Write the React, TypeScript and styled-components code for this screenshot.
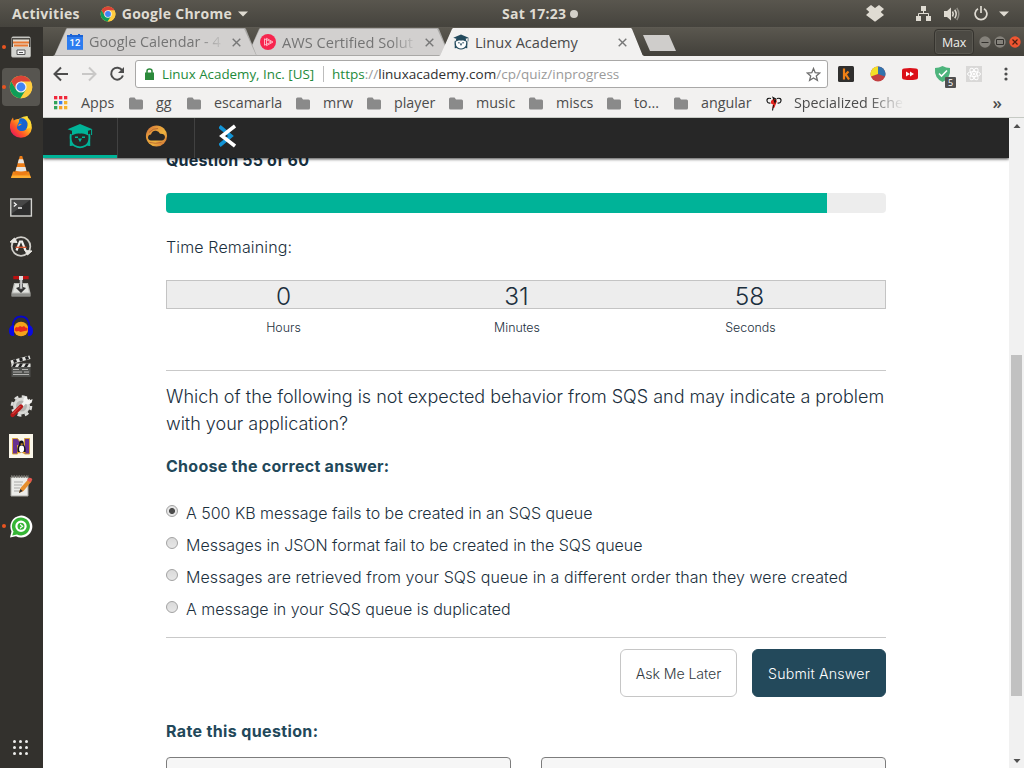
import React from "react";
import styled, { createGlobalStyle, css } from "styled-components";

const GlobalStyle = createGlobalStyle`
  * { box-sizing: border-box; }
  html, body { margin: 0; padding: 0; overflow: hidden; }
  svg { display: block; flex: none; }
`;

const uiFont = `"Open Sans", "Noto Sans", sans-serif`;
const pageFont = `Inter, "Liberation Sans", sans-serif`;

const Desktop = styled.div`
  width: 1024px;
  height: 768px;
  display: flex;
  flex-direction: column;
  overflow: hidden;
  font-family: ${uiFont};
  background: #fff;
`;

/* ---------- system bar ---------- */

const SystemBar = styled.header`
  height: 27px;
  flex: none;
  display: grid;
  grid-template-columns: 501px 78px 1fr;
  align-items: center;
  background: linear-gradient(#59564e, #45433d);
  color: #dfdbd2;
  font-size: 14px;
  font-weight: 700;
  letter-spacing: 0.27px;
  line-height: 26px;
`;

const BarLeft = styled.div`
  display: flex;
  align-items: center;
  padding-left: 12px;
`;

const AppMenu = styled.div`
  display: flex;
  align-items: center;
  margin-left: 20px;
  gap: 6px;
`;

const Clock = styled.div`
  display: flex;
  align-items: center;
  gap: 4px;
  margin-left: 1px;
  white-space: nowrap;
`;

const ClockDot = styled.span`
  width: 8px;
  height: 8px;
  border-radius: 50%;
  background: #d3d0c9;
`;

const Tray = styled.div`
  display: flex;
  align-items: center;
  justify-content: flex-end;
  padding-right: 15px;
`;

const TrayItem = styled.span<{ $gap?: number }>`
  margin-left: ${(p) => p.$gap ?? 12}px;
`;

const Below = styled.div`
  flex: 1;
  display: flex;
  min-height: 0;
`;

/* ---------- dock ---------- */

const Dock = styled.nav`
  width: 43px;
  flex: none;
  background: #33312d;
  display: flex;
  flex-direction: column;
  justify-content: space-between;
`;

const DockList = styled.div`
  display: flex;
  flex-direction: column;
`;

const DockItem = styled.div<{ $running?: boolean }>`
  height: 39.95px;
  display: flex;
  align-items: center;
  padding-left: 2px;
  &::before {
    content: "";
    width: 4px;
    height: 4px;
    margin-right: -4px;
    z-index: 1;
    border-radius: 50%;
    background: ${(p) => (p.$running ? "#e95420" : "transparent")};
  }
`;

const DockTile = styled.div<{ $active?: boolean }>`
  width: 38px;
  height: 38px;
  display: flex;
  align-items: center;
  justify-content: center;
  border-radius: 4px;
  background: ${(p) => (p.$active ? "#575550" : "transparent")};
`;

const AppGrid = styled.div`
  display: grid;
  grid-template-columns: repeat(3, 3px);
  gap: 3px;
  padding: 0 0 13px 13px;
`;

const GridDot = styled.i`
  width: 3px;
  height: 3px;
  border-radius: 50%;
  background: #eeeeec;
`;

/* ---------- browser ---------- */

const Browser = styled.main`
  flex: 1;
  min-width: 0;
  display: flex;
  flex-direction: column;
`;

const TabStrip = styled.div`
  height: 29px;
  flex: none;
  display: flex;
  align-items: flex-end;
  padding-left: 10px;
  background: linear-gradient(#5a574f, #42403a);
  border-top: 1px solid #5d5a52;
`;

const Tab = styled.div<{ $active?: boolean; $order: number; $size: number }>`
  position: relative;
  z-index: ${(p) => p.$order};
  width: 205px;
  height: 28px;
  margin-right: -12px;
  padding: 0 17px 0 14px;
  display: flex;
  align-items: center;
  font-size: ${(p) => p.$size}px;
  line-height: 28px;
  color: ${(p) => (p.$active ? "#4a4a4a" : "#747474")};
  &::before,
  &::after {
    content: "";
    position: absolute;
    inset: 0;
    z-index: -1;
    background: ${(p) => (p.$active ? "#f2f1f0" : "#a9a8a6")};
    clip-path: polygon(0 100%, 1.5px 27px, 13px 1px, 14px 0, 192px 0, 193px 1px, 203.5px 27px, 100% 100%);
  }
  &::after {
    background: ${(p) => (p.$active ? "#f2f1f0" : "#d2d0cf")};
    clip-path: polygon(2px 27px, 13.8px 1px, 191.2px 1px, 203px 27px);
  }
`;

const TabTitle = styled.span<{ $fade?: boolean }>`
  flex: 1;
  margin: 0 10px 0 6px;
  overflow: hidden;
  white-space: nowrap;
  ${(p) =>
    p.$fade &&
    css`
      mask-image: linear-gradient(90deg, #000 108px, transparent 136px);
    `}
`;

const NewTab = styled.div`
  width: 33px;
  height: 16px;
  margin: 0 0 5px 11px;
  background: #cfcdcb;
  clip-path: polygon(0 0, 26px 0, 100% 100%, 7px 100%);
`;

const WindowControls = styled.div`
  margin-left: auto;
  height: 28px;
  display: flex;
  align-items: center;
  gap: 3px;
  padding-right: 3px;
`;

const ProfileButton = styled.div`
  width: 40px;
  height: 26px;
  margin-right: 2px;
  border: 1px solid #35332e;
  border-radius: 4px;
  background: #4b4943;
  box-shadow: inset 0 0 0 1px #5a5851;
  color: #f0efed;
  font-size: 12.5px;
  line-height: 25px;
  text-align: center;
  letter-spacing: -0.2px;
`;

const Toolbar = styled.div`
  height: 36px;
  flex: none;
  display: flex;
  align-items: center;
  background: #f2f1f0;
  padding-left: 10px;
`;

const NavButtons = styled.div`
  width: 82px;
  display: flex;
  gap: 12px;
`;

const Omnibox = styled.div`
  width: 693px;
  height: 28px;
  border: 1px solid #a9a8a7;
  border-radius: 3px;
  background: #fff;
  display: flex;
  align-items: center;
  padding: 0 6px 0 9px;
  font-size: 13.5px;
  line-height: 26px;
  color: #9a9a9a;
  white-space: nowrap;
`;

const SiteIdentity = styled.span`
  width: 161px;
  margin-left: 8px;
  color: #1d8a3b;
  font-size: 13.35px;
`;

const Scheme = styled.span`
  color: #1d8a3b;
`;

const Host = styled.span`
  color: #303030;
`;

const Url = styled.span`
  flex: 1;
  padding-left: 8px;
  letter-spacing: 0.02px;
`;

const Divider = styled.span`
  width: 1px;
  height: 16px;
  background: #bdbdbd;
`;

const ExtensionList = styled.div`
  display: flex;
  align-items: center;
  height: 36px;
  margin-left: 2px;
`;

const Extension = styled.div<{ $badge?: boolean }>`
  width: 32px;
  display: flex;
  justify-content: center;
  padding: ${(p) => (p.$badge ? "3px 0 0 6px" : "0")};
`;

const Bookmarks = styled.div`
  height: 26px;
  flex: none;
  display: flex;
  align-items: center;
  padding: 0 22px 3px 11px;
  background: #f2f1f0;
  border-bottom: 1px solid #c6cac4;
  font-size: 14.3px;
  line-height: 22px;
  color: #4c4c4c;
`;

const Bookmark = styled.div<{ $width: number; $fade?: boolean }>`
  width: ${(p) => p.$width}px;
  display: flex;
  align-items: center;
  gap: ${(p) => (p.$fade ? 12 : 13)}px;
  overflow: hidden;
  white-space: nowrap;
  ${(p) =>
    p.$fade &&
    css`
      mask-image: linear-gradient(90deg, #000 102px, transparent 138px);
    `}
`;

const More = styled.span`
  margin-left: auto;
  font-size: 17px;
  font-weight: 600;
  line-height: 18px;
`;

/* ---------- web page ---------- */

const Viewport = styled.div`
  flex: 1;
  min-height: 0;
  display: flex;
`;

const Page = styled.div`
  flex: 1;
  display: flex;
  flex-direction: column;
  min-width: 0;
  font-family: ${pageFont};
  font-weight: 300;
  color: #1b2f3d;
`;

const SiteNav = styled.div`
  position: relative;
  z-index: 2;
  height: 40px;
  flex: none;
  display: flex;
  background: #272727;
  box-shadow: 0 1px 3px rgba(0, 0, 0, 0.75);
  clip-path: inset(0 0 -6px 0);
`;

const SiteTab = styled.div<{ $width: number; $active?: boolean; $last?: boolean }>`
  width: ${(p) => p.$width}px;
  height: 40px;
  display: flex;
  justify-content: center;
  padding-top: ${(p) => (p.$active ? 5 : 6)}px;
  border-right: ${(p) => (p.$last ? "none" : "1px solid #414141")};
  box-shadow: ${(p) => (p.$active ? "inset 0 -3px #00b398" : "none")};
`;

const Quiz = styled.section`
  flex: 1;
  min-height: 0;
  overflow: hidden;
  padding: 0 123px;
`;

const Counter = styled.h2`
  margin: -8px 0 23px;
  font-size: 16px;
  line-height: 20px;
  font-weight: 700;
  letter-spacing: 0.18px;
  color: #17303f;
`;

const Progress = styled.div`
  height: 20px;
  border-radius: 4px;
  overflow: hidden;
  background: #ededed;
`;

const ProgressFill = styled.div`
  height: 100%;
  background: #00b398;
`;

const TimeLabel = styled.div`
  margin: 24px 0 23px;
  font-size: 16px;
  line-height: 20px;
  letter-spacing: 0.14px;
`;

const Timer = styled.div`
  height: 29px;
  display: grid;
  grid-template-columns: 233px 233px 233px;
  border: 1px solid #c4c4c4;
  background: #ededed;
  font-size: 24.5px;
  line-height: 30px;
  text-align: center;
`;

const TimerUnits = styled.div`
  display: grid;
  grid-template-columns: 233px 234px 233px;
  margin: 9px 0 33px 1px;
  font-size: 12.4px;
  line-height: 19px;
  text-align: center;
`;

const Rule = styled.div`
  height: 1px;
  background: #c9c9c9;
`;

const Prompt = styled.p`
  margin: 12px 0 19px;
  font-size: 18px;
  line-height: 27px;
  letter-spacing: -0.01px;
`;

const Heading = styled.h3<{ $spacing?: number }>`
  margin: 0;
  font-size: 16px;
  line-height: 20px;
  font-weight: 700;
  letter-spacing: ${(p) => p.$spacing ?? 0.27}px;
  color: #22485a;
`;

const Options = styled.div`
  margin: 21px 0 12px;
`;

const Option = styled.label<{ $spacing: number }>`
  height: 32px;
  display: flex;
  align-items: center;
  gap: 8px;
  font-size: 16px;
  letter-spacing: ${(p) => p.$spacing}px;
`;

const Radio = styled.span<{ $checked?: boolean }>`
  width: 12px;
  height: 12px;
  margin-bottom: 4px;
  border: 1px solid #a2a2a2;
  border-radius: 50%;
  background: ${(p) =>
    p.$checked
      ? "radial-gradient(circle, #4c4c4c 2.6px, #e6e6e6 3.4px)"
      : "linear-gradient(#dadada, #e6e6e6)"};
`;

const Actions = styled.div`
  display: flex;
  justify-content: flex-end;
  gap: 15px;
  margin: 11px 0 24px;
`;

const Button = styled.button<{ $primary?: boolean }>`
  width: ${(p) => (p.$primary ? 134 : 117)}px;
  height: 48px;
  padding: 0;
  border: 1px solid ${(p) => (p.$primary ? "#23495b" : "#c6c6c6")};
  border-radius: 6px;
  background: ${(p) => (p.$primary ? "#23495b" : "#fff")};
  color: ${(p) => (p.$primary ? "#fff" : "#333b42")};
  font-family: ${pageFont};
  font-weight: 300;
  font-size: 14.2px;
  letter-spacing: ${(p) => (p.$primary ? 0.18 : -0.1)}px;
  white-space: nowrap;
`;

const Ratings = styled.div`
  display: grid;
  grid-template-columns: 345px 345px;
  gap: 30px;
  margin-top: 16px;
`;

const RatingBox = styled.div`
  height: 44px;
  border: 1px solid #7d7d7d;
  border-radius: 4px;
  background: #f6f6f6;
`;

const Scrollbar = styled.div`
  width: 15px;
  flex: none;
  display: flex;
  flex-direction: column;
  align-items: center;
  background: #f1f1f1;
  padding: 6px 0 5px;
`;

const Thumb = styled.div`
  width: 11px;
  height: 341px;
  margin: 227px 0 auto;
  background: #c1c1c1;
`;

/* ---------- drawings ---------- */

const Chrome = ({ size }: { size: number }) => (
  <svg width={size} height={size} viewBox="0 0 24 24">
    <circle cx="12" cy="12" r="11.2" fill="#fc4" />
    <path d="M12 6.4h9.7A11.2 11.2 0 0 1 11.4 23.2l5.4-8.4z" fill="#ffcd40" />
    <path d="M2.3 6.4A11.2 11.2 0 0 0 11.4 23.2L16.8 14.8 7.2 14.8z" fill="#0f9d58" />
    <path d="M2.3 6.4 7.2 14.8 12 6.4h9.7A11.2 11.2 0 0 0 2.3 6.4z" fill="#db4437" />
    <circle cx="12" cy="12" r="5.6" fill="#f4f4f4" />
    <circle cx="12" cy="12" r="4.4" fill="#4285f4" />
  </svg>
);

const Caret = () => (
  <svg width="10" height="6" viewBox="0 0 10 6"><path d="M0 .5h10L5 5.5z" fill="#dfdbd2" /></svg>
);

const Dropbox = () => (
  <svg width="18" height="17" viewBox="0 0 18 17">
    <path d="M5 0 9 3 13 0l5 4-3.3 3L18 10l-3 2.2-6 4.5-6-4.5L0 10l3.3-3L0 4z" fill="#dfdbd2" />
  </svg>
);

const Network = () => (
  <svg width="15" height="15" viewBox="0 0 15 15" fill="#dfdbd2">
    <path d="M5 0h5v5H5zM0 10h5v5H0zM10 10h5v5h-5z" />
    <path d="M7.5 5v2.5M2.5 10V7.5h10V10" fill="none" stroke="#dfdbd2" />
  </svg>
);

const Volume = () => (
  <svg width="16" height="14" viewBox="0 0 16 14">
    <path d="M0 4h3l4-3.5v13L3 10H0z" fill="#dfdbd2" />
    <g fill="none" strokeWidth="1.5">
      <path d="M8.5 4.5q1.5 2.5 0 5M10.7 2.7q3 4.3 0 8.6" stroke="#dfdbd2" />
      <path d="M12.8 1q4 6 0 12" stroke="#8f8c84" />
    </g>
  </svg>
);

const Power = () => (
  <svg width="14" height="15" viewBox="0 0 14 15" fill="none" stroke="#dfdbd2" strokeWidth="1.7">
    <path d="M4 2.7a5.9 5.9 0 1 0 6 0M7 0v7" />
  </svg>
);

const Files = () => (
  <svg width="24" height="24" viewBox="0 0 24 24">
    <rect x="2.5" y="1.5" width="19" height="21" rx="1.5" fill="#c4c4c0" />
    <path d="M3 3h18v9H3z" fill="#4c4a45" />
    <path d="M4 4.5h16v8H4z" fill="#e4dfd5" />
    <path d="M4 6.5h16v2H4zM5 9.5h14v2H5z" fill="#e87932" />
    <path d="M2.5 12h19v9.5h-19z" fill="#d4d4d0" />
    <path d="M8 15h8v4.5H8z" fill="#f5f5f5" stroke="#555" />
    <path d="M10 17h4v1h-4z" fill="#555" />
  </svg>
);

const Firefox = () => (
  <svg width="24" height="24" viewBox="0 0 24 24">
    <defs>
      <linearGradient id="fox" x1="0.9" y1="0.1" x2="0.1" y2="0.9">
        <stop offset="0" stopColor="#fff044" /><stop offset=".35" stopColor="#ffb11f" />
        <stop offset=".65" stopColor="#ff5a25" /><stop offset="1" stopColor="#e9135d" />
      </linearGradient>
    </defs>
    <path d="M1 13C.6 8 2 4.7 4 2.4l.7 3Q7 3.5 9.5 4q5-3 9-3-.3 2 2 4.5 2.5 3 2.4 7.5A11 10.8 0 0 1 1 13z" fill="url(#fox)" />
    <path d="M11 3.4q5.5-1 7.5 4.6.7 4-1.5 6.4-3 2.8-6.8 1-2.5-1.4-2.4-4l2.8-.7 2.2-1.7-2.2-.8Q9.5 5 11 3.4z" fill="#1762cf" />
    <path d="M12 2.6q-2 1.5-1.4 3.6 3 .1 2.3 1.7-.5 1-2.8 1.2-.9 2.4-2.2 2.2" fill="#087bee" />
    <path d="M17.5 1q1 2 1.5 5 1 4-1.5 8l4-1.5q2-6-2-9z" fill="#ffdb35" />
  </svg>
);

const Vlc = () => (
  <svg width="24" height="24" viewBox="0 0 24 24">
    <path d="M4 16.5h16l2 6.5H2z" fill="#f08719" />
    <path d="M3 20.5h18l1 2.5H2z" fill="#ffae32" />
    <path d="M10.8 1h2.4l5 17.5q-6 3-12.4 0z" fill="#ee7d16" />
    <path d="M9.9 4.2h4.2l1.2 4H8.7zM7.6 12h8.8l1 3.7q-5.4 1.6-10.8 0z" fill="#e5e5e3" />
  </svg>
);

const Terminal = () => (
  <svg width="24" height="24" viewBox="0 0 24 24">
    <rect x="1.8" y="4" width="20.6" height="17" fill="#2d2d2d" stroke="#d4d4d0" strokeWidth="1.4" />
    <path d="M3 5h18L3 18.5z" fill="#474747" />
    <path d="M4.8 7.5 7.3 9.500 4.8 11.500M9 13h4" fill="none" stroke="#f2f2f2" strokeWidth="1.300" />
  </svg>
);

const Updater = () => (
  <svg width="24" height="24" viewBox="0 0 24 24" fill="none">
    <circle cx="12" cy="11.500" r="9.300" stroke="#cfcdc8" strokeWidth="1.800" />
    <path d="m1 7 7 .5L5.500 3zM23 16l-7-.5 2.500 4.500z" fill="#e8e6e1" stroke="#e8e6e1" />
    <path d="M7.500 15.500 11 6.500h2l3.500 9" stroke="#f1f1ef" strokeWidth="2.200" />
    <path d="M6.500 12.300h11" stroke="#df542d" strokeWidth="1.300" />
  </svg>
);

const Lever = () => (
  <svg width="24" height="24" viewBox="0 0 24 24">
    <path d="M5 8h14l2.500 10v3.500h-19V18z" fill="#b9bab6" />
    <path d="M6 9h12l2 8.500H4z" fill="#e2e3df" />
    <path d="M3 18.500h18v2.500H3z" fill="#8e8f8b" />
    <path d="m7 13 3-1V9h4v3l3 1-5 5z" fill="#333" />
    <path d="M10.800 4h2.600v10h-2.600z" fill="#cfcfcf" stroke="#555" strokeWidth=".6" />
    <path d="M4.300 1h15.400v3.200H4.300z" fill="#bb1111" />
    <path d="M10 1h4v4h-4z" fill="#ddd" />
  </svg>
);

const Audacity = () => (
  <svg width="26" height="24" viewBox="0 0 26 24">
    <path d="M4.500 12Q5 1.500 13 1.500T21.500 12" fill="none" stroke="#0808c9" strokeWidth="1.800" />
    <circle cx="13" cy="14" r="7.300" fill="#f4a21a" />
    <path d="m7 13 1.500-1 1.500.5 2-1.500 2 1 2-1 1.500 1.500 2 .5v2.500l-3 .5-2 .5-2 .5-2-1-2 .5-2-1z" fill="#e7281d" />
    <path d="M6 10v11Q1 21.500 1 16q0-5.500 5-6zM20 10v11q5 .5 5-5 0-5.500-5-6z" fill="#0a0ae2" />
  </svg>
);

const Clapper = () => (
  <svg width="24" height="24" viewBox="0 0 24 24">
    <path d="m1.500 6.500 19-5 1 3.500-19 5z" fill="#e3e3e0" />
    <path d="m4 6 3-1 1 3-3 1zM10 4.500l3-1 1 3-3 1zM16 3l3-1 1 3-3 1z" fill="#222" />
    <path d="M2.500 10.500h19V23h-19z" fill="#50514e" />
    <path d="M2.500 9.500h19V13h-19z" fill="#e0e0dd" />
    <path d="M5 9.500h3L6 13H3zM11 9.500h3L12 13H9zM17 9.500h3L18 13h-3z" fill="#222" />
    <path d="M4 15.500h6M4 18h9m2 0h5M13 15.500h6M4 20.500h16" stroke="#b5b5b2" />
  </svg>
);

const Settings = () => (
  <svg width="24" height="24" viewBox="0 0 24 24">
    <circle cx="12.500" cy="12" r="9.500" fill="none" stroke="#dcdcda" strokeWidth="2.600" strokeDasharray="4 3.460" />
    <circle cx="12.500" cy="12" r="7" fill="#b4b4b1" stroke="#d8d8d5" strokeWidth="3" />
    <path d="M11 13.500 17 7.500" stroke="#f4f4f2" strokeWidth="3" />
    <path d="M14.500 8q-1-4.500 3.500-6l.5 3 2 1.500L23.500 5q0 5-5.500 5.500z" fill="#f4f4f2" />
    <path d="m3.500 21 8.500-8.500" stroke="#b51818" strokeWidth="4.200" strokeLinecap="round" />
    <path d="m3.500 20 8-8" stroke="#e45a55" />
  </svg>
);

const Penguin = () => (
  <svg width="24" height="24" viewBox="0 0 24 24">
    <path d="M0 0h24v24H0z" fill="#fbf7ea" />
    <path d="M3.500 4.500h5l7 9v-9h5v15.500h-5L8.500 11v9h-5z" fill="#68308f" stroke="#d9a338" />
    <path d="M12.500 6.500q2.600 0 2.300 4 2.700 4 1.500 8h-7.500q-1.300-4.500 1.300-8-.3-4 2.400-4z" fill="#17151c" />
    <ellipse cx="12.600" cy="15" rx="2.500" ry="3.400" fill="#fff" />
    <path d="M8.500 18h3v1.300h-3zM13.500 18h3v1.300h-3zM11.700 9.500h2v1.300h-2z" fill="#eea022" />
  </svg>
);

const Notes = () => (
  <svg width="24" height="24" viewBox="0 0 24 24">
    <path d="M2 3h17v19H2z" fill="#ecece9" stroke="#aaa9a4" />
    <path d="M2 2.500h18" stroke="#75736d" strokeWidth="2.500" strokeDasharray="1.500 1" />
    <path d="M5 8h9M5 11h8M5 14h6M5 17h6" stroke="#a9a9a7" />
    <path d="m10 19 1.500-5 8-9 3 2.500-8 9.500z" fill="#e68e2d" />
    <path d="m18 6 2-2.300q3-.4 3.300 2L21.500 8.500z" fill="#e4574e" />
    <path d="m10 19 1.300-4 2.500 2z" fill="#333" />
  </svg>
);

const Chat = () => (
  <svg width="24" height="24" viewBox="0 0 24 24">
    <path d="M1 23.500 2.500 17.500A11 11 0 1 1 7 22.200z" fill="#fff" />
    <path d="m3.200 21.500 1.300-4A9 9 0 1 1 8 20.500z" fill="#35b535" />
    <circle cx="12" cy="12.300" r="4.600" fill="none" stroke="#fff" strokeWidth="2.200" />
    <path d="m11 9.500 3.500 2.800L11 15z" fill="#fff" />
    <path d="m11 11 1.800 1.300L11 13.600z" fill="#35b535" />
  </svg>
);

const CalendarIcon = () => (
  <svg width="16" height="16" viewBox="0 0 16 16">
    <path d="M0 1h3V0h2v1h6V0h2v1h3v14.500H0z" fill="#1b63d6" />
    <path d="M0 3h16v12.500H0z" fill="#2c7cf0" />
    <text x="8" y="12" textAnchor="middle" fill="#fff" fontFamily="Roboto, sans-serif" fontWeight="500" fontSize="9.500">12</text>
  </svg>
);

const PlayIcon = () => (
  <svg width="16" height="16" viewBox="0 0 16 16">
    <circle cx="8" cy="8" r="8" fill="#f7254e" />
    <path d="M4.500 4.800v6.400l6.800-3.200zM6.500 4.300 13 8l-6.500 3.700z" fill="none" stroke="#ffc1cd" strokeWidth=".9" />
  </svg>
);

const Owl = ({ width, color, face }: { width: number; color: string; face?: string }) => (
  <svg width={width} height={width} viewBox="0 0 26 26">
    <path d="M3.500 10v10q9.500 9 19 0V10z" fill={face ?? "none"} />
    <path d="M2.800 10.500V23l3.200-.3-1.800-4zM23.200 10.500V23l-3.200-.3 1.800-4z" fill={color} />
    <path d="M4 11q-1.500 9 3.500 11.800 5.500 3.200 11 0Q23.500 20 22 11" fill="none" stroke={color} strokeWidth="1.700" />
    <path d="M.5 6.200 13 1l12.500 5.200L13 10.500z" fill={color} />
    <path d="M5 8h16v4.200q-8-4-16 0z" fill={color} />
    <path d="M24.600 6.500v5.500" stroke={color} />
    <path d="M8 14.300h3M15 14.300h3" stroke={color} strokeWidth="1.500" />
    <path d="M11 15.500h4l-2 3.800z" fill={color} />
  </svg>
);

const CloudRing = () => (
  <svg width="23" height="24" viewBox="0 0 23 24">
    <defs>
      <linearGradient id="ring" x1="0" y1="0" x2="1" y2="1">
        <stop offset="0" stopColor="#c9663a" /><stop offset=".3" stopColor="#e59a3c" />
        <stop offset=".6" stopColor="#eeb23e" /><stop offset="1" stopColor="#c96334" />
      </linearGradient>
    </defs>
    <circle cx="11.500" cy="12" r="10.600" fill="url(#ring)" />
    <path d="M6 16.500q-3-.3-3-3 .2-2.700 3-2.900Q7 6.500 11 6.800q3 .3 4 3 4.500-.3 5 3.200-.3 3.200-3.500 3.500z" fill="#272727" />
    <path d="M4 8.500Q8 4 13 4.500M4.500 18.500q6 1.500 12 0" fill="none" stroke="#a8532f" strokeWidth=".7" />
  </svg>
);

const CrossArrows = () => (
  <svg width="17" height="24" viewBox="0 0 17 24" fill="none" strokeWidth="3.600">
    <path d="M.5 2.500 12 12 .5 21.500" stroke="#1294d6" />
    <path d="M16 2 3 12l13 10" stroke="#fff" />
  </svg>
);

const CloseX = ({ color = "#777" }: { color?: string }) => (
  <svg width="9" height="9" viewBox="0 0 9 9"><path d="m.7.700 7.600 7.600M8.300.700.700 8.300" stroke={color} strokeWidth="1.400" /></svg>
);

const Folder = () => (
  <svg width="14" height="13" viewBox="0 0 14 13"><path d="M0 2Q0 .5 1.500.5h4L7 2.500h5.500Q14 2.500 14 4v7q0 1.500-1.500 1.500h-11Q0 12.500 0 11z" fill="#8a8a8a" /></svg>
);

const appColors = ["#f0283c", "#f0283c", "#f0283c", "#2fa35a", "#3b7ded", "#f5b32c", "#2fa35a", "#f5a02c", "#f5b32c"];
const AppsIcon = () => (
  <svg width="14" height="14" viewBox="0 0 14 14">
    {appColors.map((c, i) => (
      <rect key={i} x={(i % 3) * 5} y={Math.floor(i / 3) * 5} width="3.300" height="3.300" fill={c} />
    ))}
  </svg>
);

const Bug = () => (
  <svg width="16" height="15" viewBox="0 0 16 15" fill="none">
    <path d="M5 2.500Q.5 1.500 1 5q.5 2.500 3.500 2M11 2.500q4.500-1 4 2.500-.5 2.500-3.500 2" stroke="#181818" strokeWidth="1.200" />
    <path d="m5 5 3-3 3 3-1 2.500-1.500 4L6.500 12.500l.5-4-2-1z" fill="#e6241d" />
    <path d="m7 1.500 3 1.500-1 3.500zM7.500 9l-1 5.500" stroke="#111" strokeWidth="1.100" />
  </svg>
);

const BackArrow = ({ color, flip }: { color: string; flip?: boolean }) => (
  <svg width="16" height="16" viewBox="0 0 16 16" fill="none" stroke={color} strokeWidth="2">
    <path d={flip ? "M1 8h13M8 1.500 14.500 8 8 14.500" : "M15 8H2M8 1.500 1.500 8 8 14.500"} />
  </svg>
);

const Reload = () => (
  <svg width="16" height="16" viewBox="0 0 16 16">
    <path d="M13.300 4.500a6 6 0 1 0 .6 5" fill="none" stroke="#4d4d4d" strokeWidth="2" />
    <path d="M15 1v6H9z" fill="#4d4d4d" />
  </svg>
);

const Lock = () => (
  <svg width="9" height="12" viewBox="0 0 9 12">
    <path d="M0 4.500h9V12H0z" fill="#2c8a3c" />
    <path d="M2 5V3q0-2 2.500-2T7 3v2" fill="none" stroke="#2c8a3c" strokeWidth="1.500" />
  </svg>
);

const Star = () => (
  <svg width="15" height="15" viewBox="0 0 15 15">
    <path d="m7.500 1.500 1.700 4.200 4.600.3-3.500 2.900 1.100 4.500-3.900-2.500-3.900 2.500 1.100-4.500L1.200 6l4.600-.3z" fill="none" stroke="#6d6d6d" strokeWidth="1.300" />
  </svg>
);

const KIcon = () => (
  <svg width="16" height="16" viewBox="0 0 16 16">
    <rect width="16" height="16" rx="1.500" fill="#302f2e" />
    <path d="M6 2.500v11M10.500 5.500 6.500 9.500M7.800 8.500l3.200 5" stroke="#f08015" strokeWidth="2.200" fill="none" />
  </svg>
);

const PieIcon = () => (
  <svg width="16" height="16" viewBox="0 0 16 16">
    <circle cx="8" cy="8" r="7.500" fill="#c33f41" />
    <path d="M8 8V.5A7.500 7.500 0 0 0 1 10.500z" fill="#f3df27" />
    <path d="M8 8V.5a7.500 7.500 0 0 1 7 10z" fill="#3273ad" />
  </svg>
);

const ForwardIcon = () => (
  <svg width="16" height="12" viewBox="0 0 16 12">
    <path d="M2 .5q6-1 12 0 2 0 2 2v7q0 2-2 2-6 1-12 0-2 0-2-2v-7q0-2 2-2z" fill="#db1018" />
    <path d="M4 3.500 8 6 4 8.500zM8 3.500 12 6 8 8.500z" fill="#fff" />
  </svg>
);

const ShieldIcon = () => (
  <svg width="22" height="24" viewBox="0 0 22 24">
    <path d="M1 4q4-.2 7.500-2Q12 3.800 16 4q1 10-7.500 14Q0 14 1 4z" fill="#4db47c" />
    <path d="m5 9.500 2.500 2.500L13 6.500" fill="none" stroke="#fff" strokeWidth="1.600" />
    <rect x="11" y="13" width="11" height="11" rx="1" fill="#505050" />
    <text x="16.500" y="21.800" textAnchor="middle" fontFamily="Open Sans, sans-serif" fontSize="9" fill="#fff">5</text>
  </svg>
);

const AtomIcon = () => (
  <svg width="16" height="16" viewBox="0 0 16 16" fill="none" stroke="#fff">
    <path d="M0 0h16v16H0z" fill="#d9d8d7" stroke="none" />
    <ellipse cx="8" cy="8" rx="6.500" ry="2.500" />
    <ellipse cx="8" cy="8" rx="6.500" ry="2.500" transform="rotate(60 8 8)" />
    <ellipse cx="8" cy="8" rx="6.500" ry="2.500" transform="rotate(120 8 8)" />
    <circle cx="8" cy="8" r="1" fill="#fff" />
  </svg>
);

const MenuDots = () => (
  <svg width="4" height="14" viewBox="0 0 4 14" fill="#4d4d4d">
    <circle cx="2" cy="2" r="1.600" /><circle cx="2" cy="7" r="1.600" /><circle cx="2" cy="12" r="1.600" />
  </svg>
);

const WindowButton = ({ kind }: { kind: "min" | "max" | "close" }) => (
  <svg width="12" height="12" viewBox="0 0 12 12" fill="none" stroke={kind === "close" ? "#4b1f12" : "#33312d"}>
    <circle cx="6" cy="6" r="5.700" fill={kind === "close" ? "#ee5531" : "#85827b"} stroke="none" />
    {kind === "min" && <path d="M2.500 6.500h7" />}
    {kind === "max" && <path d="M2.500 3.500h7v5h-7z" />}
    {kind === "close" && <path d="m3.500 3.500 5 5M8.500 3.500l-5 5" strokeWidth="1.200" />}
  </svg>
);

const ScrollArrow = ({ down }: { down?: boolean }) => (
  <svg width="8" height="4" viewBox="0 0 8 4"><path d={down ? "M.5 0h7L4 4z" : "M.5 4h7L4 0z"} fill="#505050" /></svg>
);

/* ---------- data ---------- */

const dockApps = [
  { icon: <Files />, running: true },
  { icon: <Chrome size={24} />, running: true, active: true },
  { icon: <Firefox /> },
  { icon: <Vlc /> },
  { icon: <Terminal /> },
  { icon: <Updater /> },
  { icon: <Lever /> },
  { icon: <Audacity /> },
  { icon: <Clapper /> },
  { icon: <Settings /> },
  { icon: <Penguin /> },
  { icon: <Notes /> },
  { icon: <Chat />, running: true },
];

const folders = [
  { name: "gg", width: 58 },
  { name: "escamarla", width: 109 },
  { name: "mrw", width: 71 },
  { name: "player", width: 82 },
  { name: "music", width: 80 },
  { name: "miscs", width: 78 },
  { name: "to...", width: 67 },
  { name: "angular", width: 92 },
];

const answers = [
  { text: "A 500 KB message fails to be created in an SQS queue", spacing: -0.02, checked: true },
  { text: "Messages in JSON format fail to be created in the SQS queue", spacing: -0.01 },
  { text: "Messages are retrieved from your SQS queue in a different order than they were created", spacing: 0.065 },
  { text: "A message in your SQS queue is duplicated", spacing: -0.01 },
];

const question = { current: 55, total: 60 };

export default function App() {
  return (
    <Desktop>
      <GlobalStyle />
      <SystemBar>
        <BarLeft>
          Activities
          <AppMenu>
            <Chrome size={16} />
            Google Chrome
            <Caret />
          </AppMenu>
        </BarLeft>
        <Clock>
          Sat 17:23
          <ClockDot />
        </Clock>
        <Tray>
          <TrayItem><Dropbox /></TrayItem>
          <TrayItem $gap={32}><Network /></TrayItem>
          <TrayItem $gap={13}><Volume /></TrayItem>
          <TrayItem $gap={14}><Power /></TrayItem>
          <TrayItem $gap={11}><Caret /></TrayItem>
        </Tray>
      </SystemBar>
      <Below>
        <Dock>
          <DockList>
            {dockApps.map((app, i) => (
              <DockItem key={i} $running={app.running}>
                <DockTile $active={app.active}>{app.icon}</DockTile>
              </DockItem>
            ))}
          </DockList>
          <AppGrid>
            {Array.from({ length: 9 }, (_, i) => <GridDot key={i} />)}
          </AppGrid>
        </Dock>
        <Browser>
          <TabStrip>
            <Tab $order={2} $size={14.4}>
              <CalendarIcon />
              <TabTitle $fade>Google Calendar - 4</TabTitle>
              <CloseX />
            </Tab>
            <Tab $order={1} $size={14.6}>
              <PlayIcon />
              <TabTitle $fade>AWS Certified Solut</TabTitle>
              <CloseX />
            </Tab>
            <Tab $order={3} $size={14.6} $active>
              <Owl width={16} color="#234a5d" face="#fff" />
              <TabTitle>Linux Academy</TabTitle>
              <CloseX />
            </Tab>
            <NewTab />
            <WindowControls>
              <ProfileButton>Max</ProfileButton>
              <WindowButton kind="min" />
              <WindowButton kind="max" />
              <WindowButton kind="close" />
            </WindowControls>
          </TabStrip>
          <Toolbar>
            <NavButtons>
              <BackArrow color="#4d4d4d" />
              <BackArrow color="#c9c8c7" flip />
              <Reload />
            </NavButtons>
            <Omnibox>
              <Lock />
              <SiteIdentity>Linux Academy, Inc. [US]</SiteIdentity>
              <Divider />
              <Url><Scheme>https</Scheme>://<Host>linuxacademy.com</Host>/cp/quiz/inprogress</Url>
              <Star />
            </Omnibox>
            <ExtensionList>
              <Extension><KIcon /></Extension>
              <Extension><PieIcon /></Extension>
              <Extension><ForwardIcon /></Extension>
              <Extension $badge><ShieldIcon /></Extension>
              <Extension><AtomIcon /></Extension>
              <Extension><MenuDots /></Extension>
            </ExtensionList>
          </Toolbar>
          <Bookmarks>
            <Bookmark $width={75}><AppsIcon />Apps</Bookmark>
            {folders.map((f) => (
              <Bookmark key={f.name} $width={f.width}><Folder />{f.name}</Bookmark>
            ))}
            <Bookmark $width={137} $fade><Bug />Specialized Eche</Bookmark>
            <More>»</More>
          </Bookmarks>
          <Viewport>
            <Page>
              <SiteNav>
                <SiteTab $width={75} $active><Owl width={26} color="#00b398" /></SiteTab>
                <SiteTab $width={77}><CloudRing /></SiteTab>
                <SiteTab $width={65} $last><CrossArrows /></SiteTab>
              </SiteNav>
              <Quiz>
                <Counter>Question {question.current} of {question.total}</Counter>
                <Progress>
                  <ProgressFill style={{ width: `${(question.current / question.total) * 100 + 0.1}%` }} />
                </Progress>
                <TimeLabel>Time Remaining:</TimeLabel>
                <Timer><span>0</span><span>31</span><span>58</span></Timer>
                <TimerUnits><span>Hours</span><span>Minutes</span><span>Seconds</span></TimerUnits>
                <Rule />
                <Prompt>
                  Which of the following is not expected behavior from SQS and may indicate a problem
                  <br />
                  with your application?
                </Prompt>
                <Heading>Choose the correct answer:</Heading>
                <Options>
                  {answers.map((a) => (
                    <Option key={a.text} $spacing={a.spacing}>
                      <Radio $checked={a.checked} />
                      {a.text}
                    </Option>
                  ))}
                </Options>
                <Rule />
                <Actions>
                  <Button>Ask Me Later</Button>
                  <Button $primary>Submit Answer</Button>
                </Actions>
                <Heading $spacing={0.36}>Rate this question:</Heading>
                <Ratings>
                  <RatingBox />
                  <RatingBox />
                </Ratings>
              </Quiz>
            </Page>
            <Scrollbar>
              <ScrollArrow />
              <Thumb />
              <ScrollArrow down />
            </Scrollbar>
          </Viewport>
        </Browser>
      </Below>
    </Desktop>
  );
}
